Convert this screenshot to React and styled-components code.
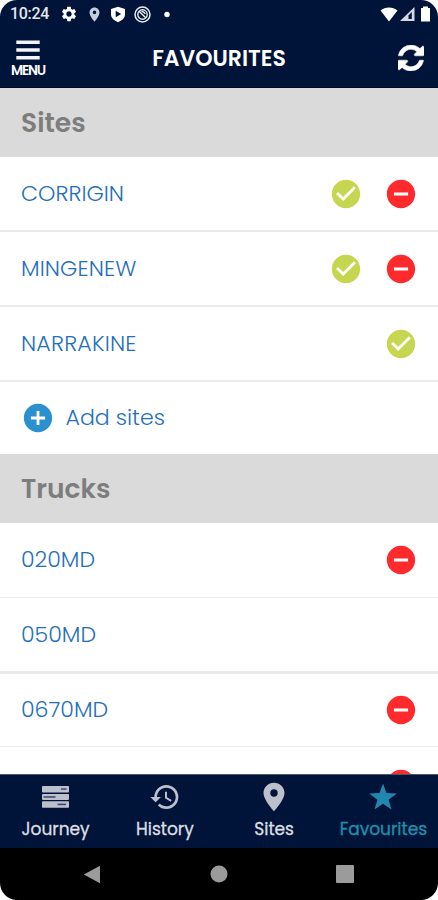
import React from 'react';
import styled, { createGlobalStyle } from 'styled-components';
import {
  MdSettings,
  MdLocationOn,
  MdCheckCircle,
  MdRemoveCircle,
  MdAddCircle,
  MdHistory,
} from 'react-icons/md';

const GlobalStyle = createGlobalStyle`
  *, *::before, *::after { box-sizing: border-box; }
  body { margin: 0; background: #fff; }
`;

const Screen = styled.main`
  display: flex;
  flex-direction: column;
  width: 438px;
  height: 900px;
  overflow: hidden;
  border-radius: 17px;
  background: #fff;
  font-family: Poppins, Inter, sans-serif;
`;

const Top = styled.header`
  flex: none;
  height: 88px;
  background: #001439;
  border-bottom: 1px solid #000826;
  color: #fff;
`;

const StatusBar = styled.div`
  display: flex;
  align-items: center;
  height: 28px;
  padding: 0 7px 0 10px;
`;

const Clock = styled.span`
  width: 50px;
  font: 500 16px/30px Roboto, sans-serif;
  letter-spacing: -0.3px;
  color: #e4e6eb;
`;

const StatusIcons = styled.div`
  display: flex;
  align-items: center;
  gap: 7.5px;
  svg { display: block; }
`;

const Signals = styled(StatusIcons)`
  margin-left: auto;
  gap: 1px;
`;

const TitleBar = styled.div`
  display: grid;
  grid-template-columns: 56px 1fr 56px;
  align-items: center;
  height: 60px;
`;

const MenuButton = styled.button`
  display: flex;
  flex-direction: column;
  align-items: center;
  gap: 3px;
  padding: 0;
  border: 0;
  background: none;
  color: #fff;
  font: 600 13.5px/13px Poppins, Inter, sans-serif;
  letter-spacing: -1.2px;
`;

const Title = styled.h1`
  margin: 0;
  padding-top: 1px;
  text-align: center;
  font-size: 22px;
  font-weight: 600;
  line-height: 30px;
`;

const RefreshButton = styled.button`
  display: flex;
  justify-content: center;
  padding: 0 0 0 1px;
  border: 0;
  background: none;
  color: #fff;
`;

const Content = styled.div`
  flex: 1;
  min-height: 0;
  overflow: hidden;
`;

const SectionHeading = styled.h2`
  display: flex;
  align-items: center;
  height: 69px;
  margin: 0;
  padding: 1px 21px 0;
  background: #dadada;
  color: #7d7d7d;
  font-size: 26.5px;
  font-weight: 600;
`;

const Row = styled.div`
  display: flex;
  align-items: center;
  height: ${(p) => p.$height || 75}px;
  padding: 0 20px 0 21px;
  border-bottom: ${(p) => (p.$line ?? 2)}px solid #ebebeb;
`;

const Name = styled.span`
  color: #1f70bd;
  font-size: 22.1px;
  font-weight: 300;
  line-height: 30px;
  letter-spacing: ${(p) => p.$spacing || 0}px;
`;

const Actions = styled.div`
  display: flex;
  gap: 20.7px;
  margin-left: auto;
  svg { display: block; }
`;

const AddRow = styled(Row)`
  gap: 10.5px;
  svg { display: block; }
`;

const TabBar = styled.nav`
  flex: none;
  display: grid;
  grid-template-columns: repeat(4, 1fr);
  height: 74px;
  padding-left: 1px;
  border-top: 1px solid #4c566d;
  background: #001439;
`;

const Tab = styled.a`
  display: flex;
  flex-direction: column;
  align-items: center;
  color: ${(p) => (p.$active ? '#218fae' : '#dddee2')};
  font-size: 17px;
  font-weight: 400;
  line-height: 22px;
  -webkit-text-stroke: 0.3px currentColor;
`;

const TabIcon = styled.span`
  display: flex;
  align-items: center;
  justify-content: center;
  height: 43px;
  color: ${(p) => (p.$active ? '#2187b0' : '#bcc0cd')};
`;

const SystemBar = styled.footer`
  flex: none;
  display: flex;
  align-items: center;
  justify-content: space-between;
  height: 52px;
  padding: 0 84px 0 83px;
  background: #000;
  svg { display: block; }
`;

const ShieldIcon = () => (
  <svg width="16" height="17" viewBox="0 0 15 17">
    <path d="M7.5 .7 14.500 3v5.500c0 3.600-3.300 6.200-7 7.700C3.800 14.700.500 12.100.500 8.500V3z" fill="#fff" />
    <path d="M5.200 4.800 10.700 8 5.200 11.200z" fill="#001439" />
  </svg>
);

const RingIcon = () => (
  <svg width="17" height="17" viewBox="0 0 17 17" fill="none" stroke="#e8eaef">
    <circle cx="8.500" cy="8.500" r="7.500" strokeWidth="1.500" />
    <circle cx="8.500" cy="8.500" r="4.700" strokeWidth="1.400" />
    <path d="m5 5.200 7 6.800M7.500 5.500c2-.5 3 1 3.800 2.500" strokeWidth="1.500" />
  </svg>
);

const DotIcon = () => (
  <svg width="17" height="17" viewBox="0 0 17 17"><circle cx="9" cy="8.500" r="2.700" fill="#fff" /></svg>
);

const WifiIcon = () => (
  <svg width="18" height="15" viewBox="0 0 18 15">
    <path d="M.5 3.500C5-.5 13-.5 17.500 3.500L9 14.500z" fill="#fff" />
  </svg>
);

const CellIcon = () => (
  <svg width="17" height="16" viewBox="0 0 17 16">
    <path d="M15.500 1v14H1z" fill="#d5d8df" />
    <path d="M12.800 6v7H9.500V9.500z" fill="#001439" />
  </svg>
);

const BatteryIcon = () => (
  <svg width="14" height="16" viewBox="0 0 14 16">
    <path d="M6 .5h5V2h2v13.500H4V2h2z" fill="#fff" />
  </svg>
);

const MenuIcon = () => (
  <svg width="24" height="21" viewBox="0 0 24 21" fill="#f3f4f7">
    <path d="M.3.500h23.400v3.600H.3zM.3 8.200h23.400v3.600H.3zM.3 16h23.400v3.600H.3z" />
  </svg>
);

const RefreshIcon = () => (
  <svg width="26" height="26" viewBox="0 0 1536 1536" fill="currentColor">
    <path d="M1511 928q0 5-1 7-64 268-268 434.500t-478 166.500q-146 0-282.500-55t-243.500-157l-129 129q-19 19-45 19t-45-19-19-45v-448q0-26 19-45t45-19h448q26 0 45 19t19 45-19 45l-137 137q71 66 161 102t187 36q134 0 250-65t186-179q11-17 53-117 8-23 30-23h192q13 0 22.500 9.500t9.500 22.500zm25-800v448q0 26-19 45t-45 19h-448q-26 0-45-19t-19-45 19-45l138-138q-148-137-349-137-134 0-250 65t-186 179q-11 17-53 117-8 23-30 23h-199q-13 0-22.500-9.500t-9.500-22.500v-7q65-268 270-434.500t480-166.500q146 0 284 55.500t245 156.500l130-129q19-19 45-19t45 19 19 45z" stroke="currentColor" strokeWidth="30" />
  </svg>
);

const JourneyIcon = () => (
  <svg width="27" height="22" viewBox="0 0 27 22">
    <g fill="#bcc0cd">
      <rect width="27" height="6.500" rx=".8" />
      <rect y="7.900" width="27" height="6" rx=".8" />
      <rect y="15.200" width="27" height="6.500" rx=".8" />
    </g>
    <g fill="#39476a">
      <rect x="19" y="2.300" width="5.500" height="1.500" />
      <rect x="1.500" y="10.200" width="12" height="1.500" />
      <rect x="15.500" y="17.600" width="8.500" height="1.600" />
    </g>
  </svg>
);

const PinIcon = () => (
  <svg width="22" height="30" viewBox="0 0 22 30">
    <path d="M11 .7C5.200.7.500 5.300.500 11.100.500 18.200 11 29.300 11 29.300S21.500 18.200 21.500 11.100C21.500 5.300 16.800.7 11 .7zm0 14a3.700 3.700 0 1 1 0-7.400 3.700 3.700 0 0 1 0 7.400z" fill="currentColor" />
  </svg>
);

const StarIcon = () => (
  <svg width="28" height="27" viewBox="0 0 28 27">
    <path d="m14 .4 3.500 9.700 10.200.3-8.100 6.300 2.900 9.900L14 20.800l-8.500 5.800 2.900-9.900L.3 10.400l10.200-.3z" fill="currentColor" />
  </svg>
);

const sites = [
  { name: 'CORRIGIN', check: true, remove: true },
  { name: 'MINGENEW', spacing: 0.1, check: true, remove: true },
  { name: 'NARRAKINE', spacing: 0.2, check: true },
];

const trucks = [
  { id: 1, name: '020MD', remove: true, line: 1 },
  { id: 2, name: '050MD', line: 3, height: 76 },
  { id: 3, name: '0670MD', remove: true, line: 1, height: 73 },
  { id: 4, remove: true },
];

const ItemRow = ({ item }) => (
  <Row $line={item.line} $height={item.height}>
    {item.name && <Name $spacing={item.spacing}>{item.name}</Name>}
    <Actions>
      {item.check && <MdCheckCircle size={34} color="#c6d650" />}
      {item.remove && <MdRemoveCircle size={34} color="#ff2a2c" />}
    </Actions>
  </Row>
);

const tabs = [
  { label: 'Journey', icon: <JourneyIcon /> },
  { label: 'History', icon: <MdHistory size={32} /> },
  { label: 'Sites', icon: <PinIcon /> },
  { label: 'Favourites', icon: <StarIcon />, active: true },
];

export default function App() {
  return (
    <>
      <GlobalStyle />
      <Screen>
        <Top>
          <StatusBar>
            <Clock>10:24</Clock>
            <StatusIcons>
              <MdSettings size={18} color="#fff" />
              <MdLocationOn size={17} color="#c6cddd" />
              <ShieldIcon />
              <RingIcon />
              <DotIcon />
            </StatusIcons>
            <Signals>
              <WifiIcon />
              <CellIcon />
              <BatteryIcon />
            </Signals>
          </StatusBar>
          <TitleBar>
            <MenuButton>
              <MenuIcon />
              MENU
            </MenuButton>
            <Title>FAVOURITES</Title>
            <RefreshButton>
              <RefreshIcon />
            </RefreshButton>
          </TitleBar>
        </Top>
        <Content>
          <SectionHeading>Sites</SectionHeading>
          {sites.map((item) => <ItemRow key={item.name} item={item} />)}
          <AddRow $height={72} $line={0}>
            <MdAddCircle size={34} color="#2b90d0" />
            <Name>Add sites</Name>
          </AddRow>
          <SectionHeading>Trucks</SectionHeading>
          {trucks.map((item) => <ItemRow key={item.id} item={item} />)}
        </Content>
        <TabBar>
          {tabs.map((tab) => (
            <Tab key={tab.label} $active={tab.active}>
              <TabIcon $active={tab.active}>{tab.icon}</TabIcon>
              {tab.label}
            </Tab>
          ))}
        </TabBar>
        <SystemBar>
          <svg width="18" height="19" viewBox="0 0 18 19"><path d="M17 .8v17.400L.8 9.500z" fill="#9b9b9b" /></svg>
          <svg width="18" height="18" viewBox="0 0 18 18"><circle cx="9" cy="9" r="8.500" fill="#9b9b9b" /></svg>
          <svg width="18" height="18" viewBox="0 0 18 18"><rect width="18" height="18" rx="1" fill="#9b9b9b" /></svg>
        </SystemBar>
      </Screen>
    </>
  );
}
